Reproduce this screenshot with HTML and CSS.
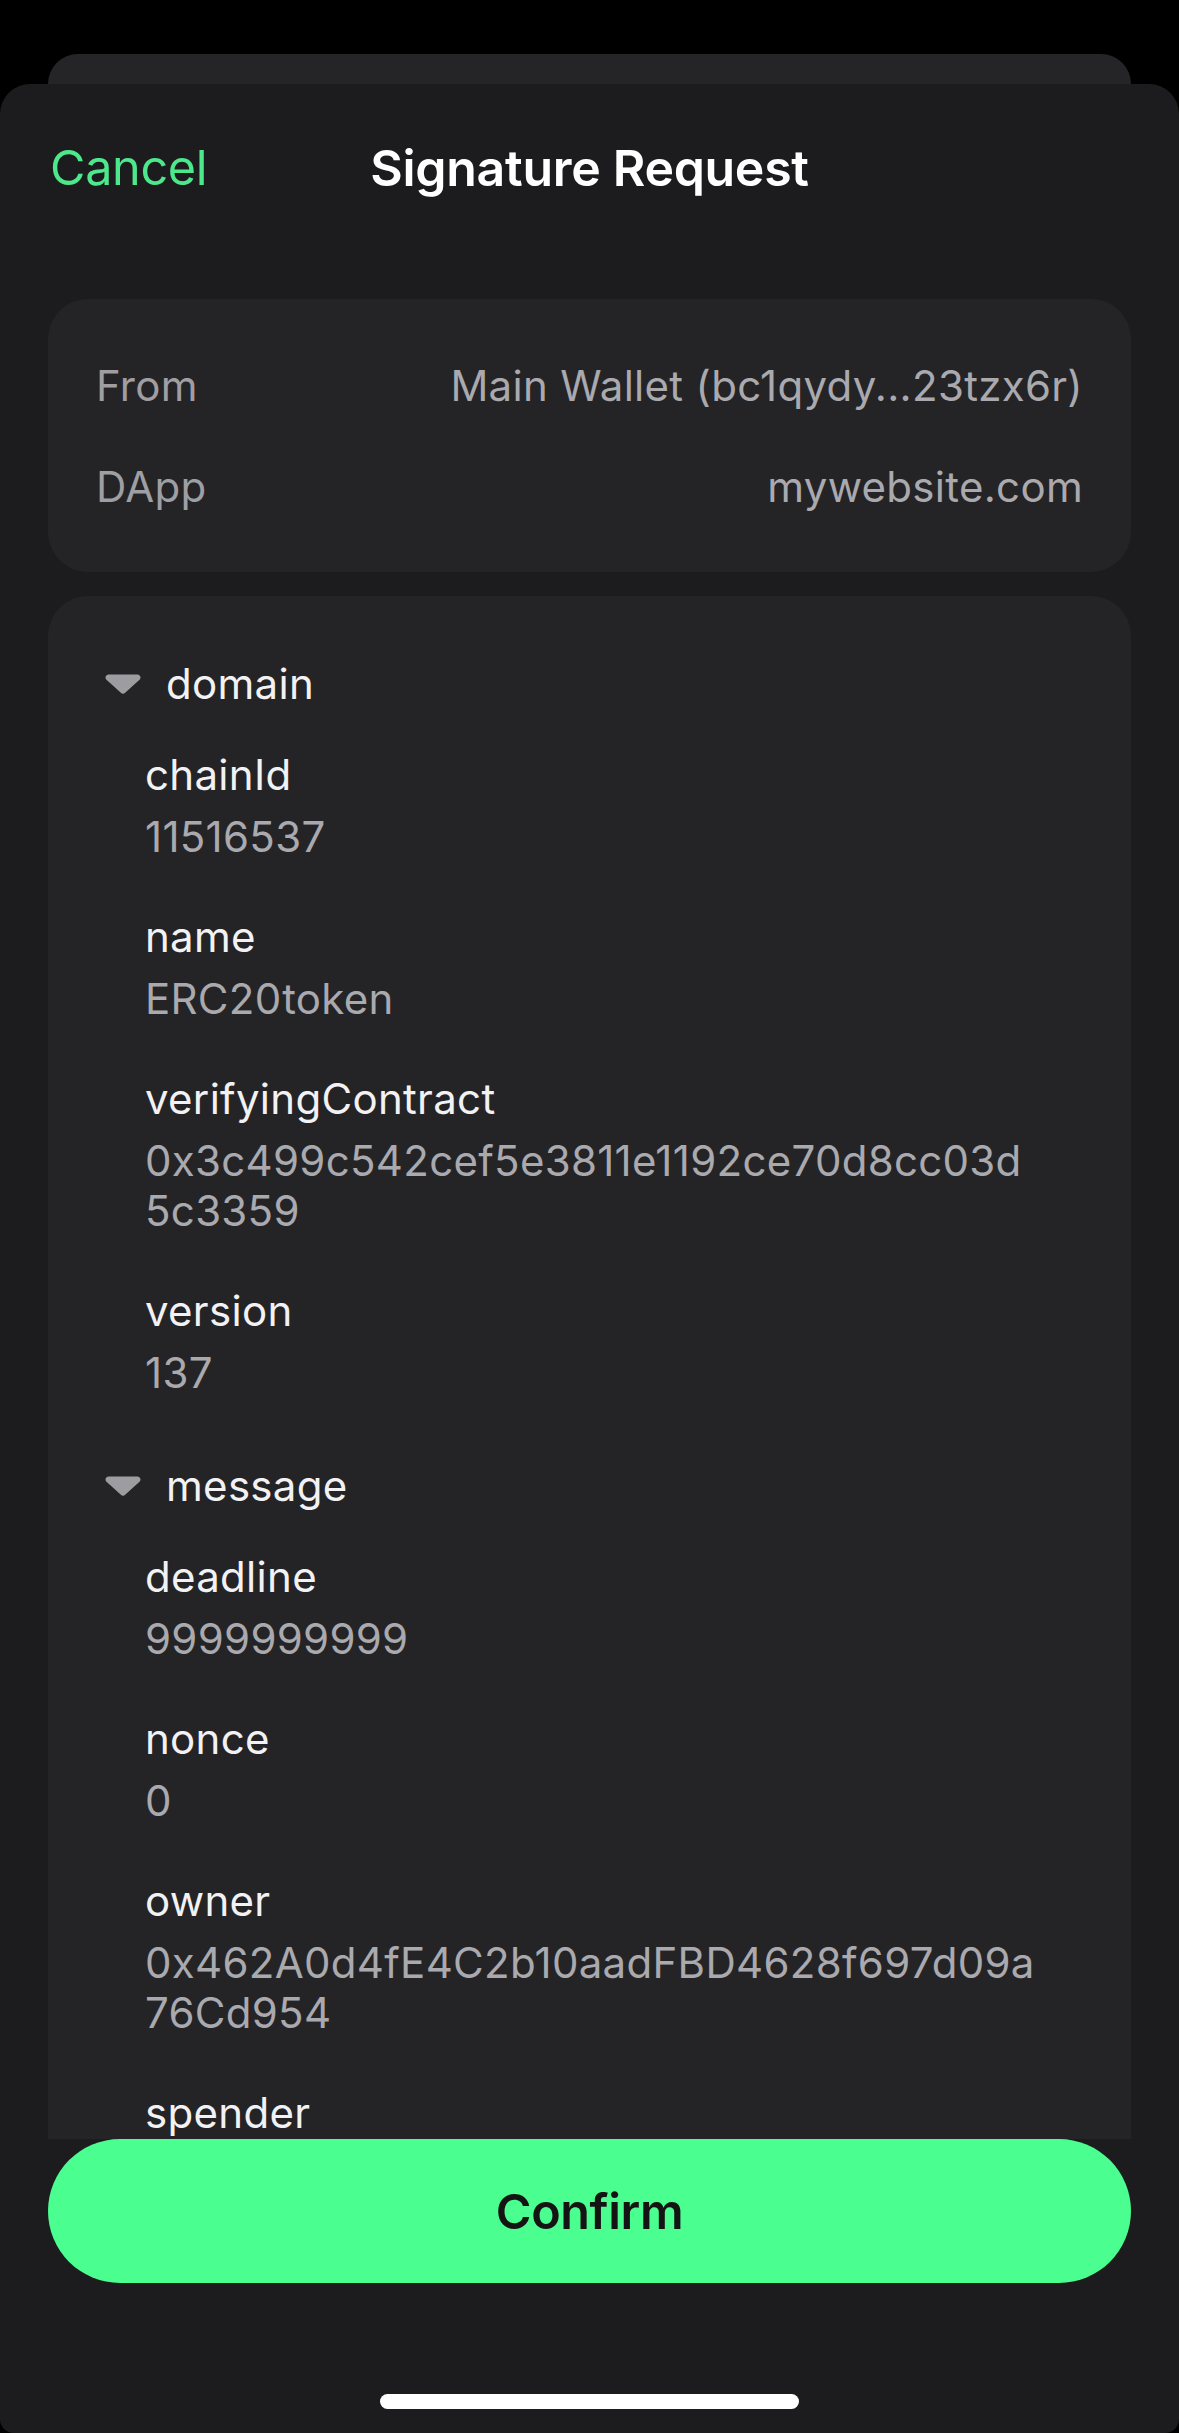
FILE: index.html
```html
<!DOCTYPE html>
<html lang="en">
<head>
<meta charset="utf-8">
<title>Signature Request</title>
<link rel="stylesheet" href="styles.css">
</head>
<body>
<div class="screen">
  <div class="back-card"></div>
  <div class="sheet">
    <header class="nav">
      <span class="nav-cancel">Cancel</span>
      <h1 class="nav-title">Signature Request</h1>
      <span class="nav-spacer"></span>
    </header>
    <main class="scroll">
      <section class="card info-card">
        <div class="info-row"><span class="info-label">From</span><span class="info-value">Main Wallet (bc1qydy...23tzx6r)</span></div>
        <div class="info-row"><span class="info-label">DApp</span><span class="info-value">mywebsite.com</span></div>
      </section>
      <section class="card tree-card">
        <div class="group">
          <div class="group-head">
            <svg class="caret" viewBox="0 0 36 20" width="36" height="20" aria-hidden="true"><path d="M3.5 0.5 H32.5 A3 3 0 0 1 34.8 5.4 L20.4 18.6 A3.4 3.4 0 0 1 15.6 18.6 L1.2 5.4 A3 3 0 0 1 3.5 0.5 Z"/></svg>
            <span class="group-name">domain</span>
          </div>
          <div class="field"><div class="field-key">chainId</div><div class="field-val">11516537</div></div>
          <div class="field"><div class="field-key">name</div><div class="field-val">ERC20token</div></div>
          <div class="field"><div class="field-key">verifyingContract</div><div class="field-val">0x3c499c542cef5e3811e1192ce70d8cc03d5c3359</div></div>
          <div class="field"><div class="field-key">version</div><div class="field-val">137</div></div>
        </div>
        <div class="group">
          <div class="group-head">
            <svg class="caret" viewBox="0 0 36 20" width="36" height="20" aria-hidden="true"><path d="M3.5 0.5 H32.5 A3 3 0 0 1 34.8 5.4 L20.4 18.6 A3.4 3.4 0 0 1 15.6 18.6 L1.2 5.4 A3 3 0 0 1 3.5 0.5 Z"/></svg>
            <span class="group-name">message</span>
          </div>
          <div class="field"><div class="field-key">deadline</div><div class="field-val">9999999999</div></div>
          <div class="field"><div class="field-key">nonce</div><div class="field-val">0</div></div>
          <div class="field"><div class="field-key">owner</div><div class="field-val">0x462A0d4fE4C2b10aadFBD4628f697d09a76Cd954</div></div>
          <div class="field"><div class="field-key">spender</div></div>
        </div>
      </section>
    </main>
    <footer class="footer">
      <button class="confirm" type="button">Confirm</button>
      <div class="home-indicator"></div>
    </footer>
  </div>
</div>
</body>
</html>
```

FILE: styles.css
```css
* { box-sizing: border-box; }

html, body {
  margin: 0;
  padding: 0;
  background: #000;
}

body {
  font-family: "Inter", "Noto Sans", "Liberation Sans", sans-serif;
  color: #fff;
  -webkit-font-smoothing: antialiased;
}

.screen {
  width: 1179px;
  height: 2433px;
  display: flex;
  flex-direction: column;
  overflow: hidden;
  background: #000;
}

.back-card {
  flex: none;
  height: 30px;
  margin: 54px 48px 0;
  background: #252527;
  border-radius: 30px 30px 0 0;
}

.sheet {
  flex: 1;
  min-height: 0;
  display: flex;
  flex-direction: column;
  background: #1c1c1e;
  border-radius: 30px 30px 14px 14px;
  overflow: hidden;
}

.nav {
  flex: none;
  display: grid;
  grid-template-columns: 1fr auto 1fr;
  align-items: center;
  padding: 54px 50px 0;
  height: 114px;
}

.nav-cancel {
  justify-self: start;
  font-size: 48.5px;
  line-height: 60px;
  color: #4de88c;
  letter-spacing: -0.3px;
}

.nav-title {
  margin: 0;
  font-size: 50px;
  line-height: 60px;
  font-weight: 600;
  color: #fff;
  letter-spacing: -0.3px;
}

.scroll {
  flex: 1;
  min-height: 0;
  overflow: hidden;
  padding: 101px 48px 0;
  display: flex;
  flex-direction: column;
  gap: 24px;
}

.card {
  flex: none;
  background: #242427;
  border-radius: 40px;
}

.info-card {
  padding: 62px 48px 60px;
  display: flex;
  flex-direction: column;
  gap: 51px;
}

.info-row {
  display: flex;
  justify-content: space-between;
  font-size: 42px;
  line-height: 50px;
  letter-spacing: 0.3px;
}

.info-label { color: #9e9ea3; }
.info-value { color: #a9a9ae; }

.tree-card {
  padding: 63px 91px 240px 57px;
  display: flex;
  flex-direction: column;
  gap: 63px;
}

.group {
  display: flex;
  flex-direction: column;
  gap: 50px;
}

.group-head {
  display: flex;
  align-items: center;
  gap: 25px;
  height: 50px;
  margin-bottom: -9px;
}

.caret {
  flex: none;
  fill: #9d9da1;
}

.group-name {
  font-size: 42px;
  line-height: 50px;
  color: #f2f2f4;
  letter-spacing: 0.3px;
}

.field {
  padding-left: 40px;
  display: flex;
  flex-direction: column;
  gap: 12px;
  font-size: 42px;
  line-height: 50px;
  letter-spacing: 0.3px;
}

.field-key { color: #f2f2f4; }

.field-val {
  color: #a9a9ae;
  word-break: break-all;
}

.footer {
  flex: none;
  height: 294px;
  display: flex;
  flex-direction: column;
  align-items: center;
  padding: 0 48px;
}

.confirm {
  width: 100%;
  height: 144px;
  border: 0;
  border-radius: 72px;
  background: #4afe8f;
  color: #141414;
  font-family: inherit;
  font-size: 48.5px;
  font-weight: 600;
  letter-spacing: -0.4px;
}

.home-indicator {
  margin-top: 111px;
  width: 419px;
  height: 15px;
  border-radius: 8px;
  background: #fff;
}
```
